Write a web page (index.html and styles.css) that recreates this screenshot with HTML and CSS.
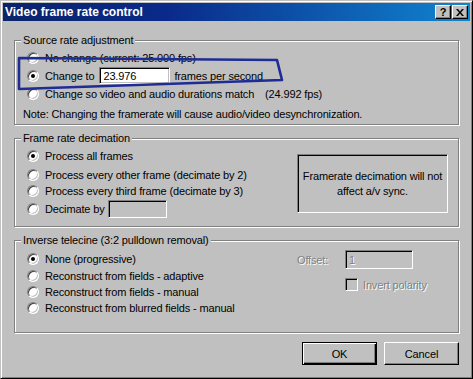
FILE: index.html
```html
<!DOCTYPE html>
<html lang="en">
<head>
    <meta charset="UTF-8">
    <title>Video frame rate control</title>
    <link rel="stylesheet" href="styles.css">
</head>
<body>
    <div class="window">
        <!-- Title bar -->
        <div class="titlebar">
            <span class="title">Video frame rate control</span>
            <div class="caption-buttons">
                <span class="cap-btn help">?</span>
                <span class="cap-btn close">
                    <svg width="8" height="7" viewBox="0 0 8 7"><path d="M0 0h2l2 2.5 2-2.5h2l-3 3.5 3 3.5h-2l-2-2.5-2 2.5h-2l3-3.5z" fill="#000"/></svg>
                </span>
            </div>
        </div>

        <div class="dialog">
            <!-- Source rate -->
            <fieldset class="group">
                <legend>Source rate adjustment</legend>
                <div class="source-body">
                    <div class="opt"><span class="radio"></span>No change (current: 25.000 fps)</div>
                    <div class="opt opt-edit"><span class="radio on"></span>Change to<span class="edit sunken fps-edit">23.976</span>frames per second</div>
                    <div class="opt opt-tall"><span class="radio"></span>Change so video and audio durations match<span class="fps">(24.992 fps)</span></div>
                    <p class="note">Note: Changing the framerate will cause audio/video desynchronization.</p>
                </div>
            </fieldset>

            <!-- Decimation -->
            <fieldset class="group">
                <legend>Frame rate decimation</legend>
                <div class="split decimate-body">
                    <div class="col">
                        <div class="opt first"><span class="radio on"></span>Process all frames</div>
                        <div class="opt"><span class="radio"></span>Process every other frame (decimate by 2)</div>
                        <div class="opt"><span class="radio"></span>Process every third frame (decimate by 3)</div>
                        <div class="opt opt-edit"><span class="radio"></span>Decimate by<span class="edit sunken disabled dec-edit"></span></div>
                    </div>
                    <div class="info sunken">Framerate decimation will not<br>affect a/v sync.</div>
                </div>
            </fieldset>

            <!-- Telecine -->
            <fieldset class="group">
                <legend>Inverse telecine (3:2 pulldown removal)</legend>
                <div class="split ivtc-body">
                    <div class="col">
                        <div class="opt first-ivtc"><span class="radio on"></span>None (progressive)</div>
                        <div class="opt"><span class="radio"></span>Reconstruct from fields - adaptive</div>
                        <div class="opt"><span class="radio"></span>Reconstruct from fields - manual</div>
                        <div class="opt"><span class="radio"></span>Reconstruct from blurred fields - manual</div>
                    </div>
                    <div class="offset-panel">
                        <span class="dim">Offset:</span>
                        <span class="edit sunken disabled off-edit"><span class="dim">1</span></span>
                        <span></span>
                        <div class="check-row"><span class="check sunken"></span><span class="dim">Invert polarity</span></div>
                    </div>
                </div>
            </fieldset>

            <div class="buttons">
                <span class="btn default">OK</span>
                <span class="btn">Cancel</span>
            </div>
        </div>

        <!-- hand-drawn highlight -->
        <svg class="scribble" width="473" height="379" viewBox="0 0 473 379">
            <path d="M18 57 L276 59 L281 79 L18 88 Z" fill="none" stroke="#1f2c94" stroke-width="2.6" stroke-linejoin="round"/>
        </svg>
    </div>
</body>
</html>
```

FILE: styles.css
```css
/* Classic dialog look */
body {
    margin: 0;
    background: #c0c0c0;
    font-family: "Liberation Sans", Arial, sans-serif;
    font-size: 11px;
    letter-spacing: -0.15px;
    color: #000;
}

.window {
    position: relative;
    width: 473px;
    height: 379px;
    box-sizing: border-box;
    border: 1px solid;
    border-color: #c0c0c0 #000 #000 #c0c0c0;
    box-shadow: inset 1px 1px #fff, inset -1px -1px #808080;
    padding: 2px;
    background: #c0c0c0;
}

.titlebar {
    height: 18px;
    display: flex;
    align-items: center;
    padding-left: 2px;
    background: linear-gradient(to right, #0a246a 0%, #0a2a8a 35%, #1084d0 100%);
}

.title {
    color: #fff;
    font-weight: bold;
    font-size: 12px;
    letter-spacing: 0;
    flex: 1;
}

.caption-buttons {
    display: flex;
    gap: 1px;
    margin-right: 2px;
}

.cap-btn {
    width: 16px;
    height: 14px;
    box-sizing: border-box;
    background: #c0c0c0;
    border: 1px solid;
    border-color: #fff #000 #000 #fff;
    box-shadow: inset -1px -1px #808080;
    display: flex;
    align-items: center;
    justify-content: center;
    font-weight: bold;
    font-size: 11px;
    line-height: 1;
}

.dialog {
    padding: 13px 11px 0;
}

/* Group boxes */
.group {
    margin: 0 0 7px;
    padding: 0;
    min-width: 0;
    border: 1px solid #808080;
    box-shadow: inset 1px 1px #fff, 1px 1px #fff;
}

.group legend {
    margin-left: 6px;
    padding: 0 2px;
    line-height: 13px;
    background: #c0c0c0;
}

.source-body {
    padding: 3px 10px 3px 12px;
}

.opt {
    display: flex;
    align-items: center;
    height: 16px;
    white-space: nowrap;
}

.opt-edit {
    height: 19px;
}

.opt-tall {
    height: 17px;
}

.radio {
    position: relative;
    flex: none;
    width: 12px;
    height: 12px;
    box-sizing: border-box;
    border-radius: 50%;
    background: #fff;
    border: 1px solid;
    border-color: #808080 #fff #fff #808080;
    box-shadow: inset 1px 1px #404040, inset -1px -1px #c0c0c0;
    margin-right: 6px;
}

.radio.on::after {
    content: '';
    position: absolute;
    left: 3px;
    top: 3px;
    width: 4px;
    height: 4px;
    border-radius: 50%;
    background: #000;
}

.sunken {
    box-sizing: border-box;
    border: 1px solid;
    border-color: #808080 #fff #fff #808080;
    box-shadow: inset 1px 1px #000, inset -1px -1px #c0c0c0;
}

.edit {
    display: flex;
    align-items: center;
    background: #fff;
    padding-left: 3px;
}

.edit.disabled {
    background: #c0c0c0;
}

.fps-edit {
    width: 71px;
    height: 17px;
    margin: 0 4px 0 5px;
}

.fps {
    margin-left: 11px;
}

.note {
    margin: 6px 0 0 -4px;
    line-height: 13px;
}

/* two column group content */
.split {
    display: flex;
    align-items: flex-start;
}

.decimate-body {
    padding: 3px 10px 8px 12px;
}

.decimate-body .first {
    margin-bottom: 3px;
}

.dec-edit {
    width: 59px;
    height: 18px;
    margin-left: 4px;
}

.info {
    margin: 6px 0 0 auto;
    width: 151px;
    height: 59px;
    display: flex;
    align-items: center;
    justify-content: center;
    text-align: center;
    line-height: 15px;
}

.ivtc-body {
    padding: 4px 10px 16px 12px;
}

.first-ivtc {
    margin-bottom: 1px;
}

.offset-panel {
    margin: -1px 35px 0 auto;
    display: grid;
    grid-template-columns: 48px 68px;
    row-gap: 9px;
    align-items: center;
    white-space: nowrap;
}

.off-edit {
    height: 19px;
}

.dim {
    color: #808080;
    text-shadow: 1px 1px #fff;
}

.check-row {
    display: flex;
    align-items: center;
}

.check {
    flex: none;
    width: 13px;
    height: 13px;
    background: #c0c0c0;
    margin-right: 5px;
}

/* Buttons */
.buttons {
    display: flex;
    justify-content: flex-end;
    gap: 7px;
    margin-top: 9px;
}

.btn {
    width: 75px;
    height: 23px;
    box-sizing: border-box;
    display: flex;
    align-items: center;
    justify-content: center;
    border: 1px solid;
    border-color: #fff #000 #000 #fff;
    box-shadow: inset -1px -1px #808080;
}

.btn.default {
    border-color: #000;
    box-shadow: inset 1px 1px #fff, inset -1px -1px #000, inset -2px -2px #808080;
}

.scribble {
    position: absolute;
    left: 0;
    top: 0;
    pointer-events: none;
}
```
